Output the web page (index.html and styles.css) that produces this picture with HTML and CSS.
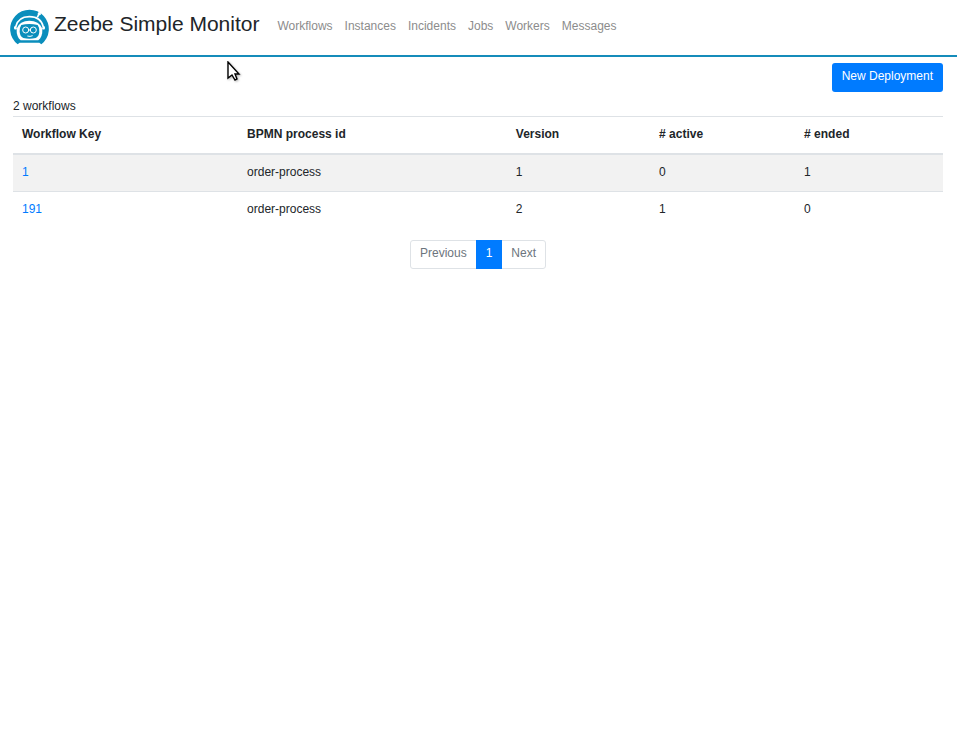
FILE: index.html
```html
<!DOCTYPE html>
<html lang="en">
<head>
<meta charset="utf-8">
<meta name="viewport" content="width=device-width, initial-scale=1">
<title>Zeebe Simple Monitor</title>
<link rel="stylesheet" href="styles.css">
</head>
<body>
<header class="navbar">
  <a class="brand" href="#">
    <svg class="logo" viewBox="0 0 117 108" aria-hidden="true">
      <path class="blue" d="M23 106A58 58 0 1 1 94 106L88 101H29Z"/>
      <path class="line" d="M17 54C22 32 38 23 58 23S95 32 100 54"/>
      <path class="line" d="M82 25L86 17"/>
      <circle class="white" cx="88" cy="14" r="5"/>
      <path class="white" d="M12 55Q13 50 18 51L21 59L15 62Q11 60 12 55ZM105 55Q104 50 99 51L96 59L102 62Q106 60 105 55Z"/>
      <path class="white" d="M20 61C25 43 40 35 58 35S92 43 97 61C98 77 93 88 85 94H32C24 88 19 77 20 61Z"/>
      <path class="blue" d="M34 48Q58 42 83 48Q88 54 88 68Q87 82 77 87Q58 92 40 87Q30 82 29 68Q29 54 34 48Z"/>
      <circle class="line thin" cx="47" cy="63" r="9"/>
      <circle class="line thin" cx="70" cy="63" r="9"/>
      <path class="line thin" d="M55 67L62 59M52 81Q60 84 68 80"/>
    </svg>
    <span>Zeebe Simple Monitor</span>
  </a>
  <nav class="nav">
    <a href="#">Workflows</a>
    <a href="#">Instances</a>
    <a href="#">Incidents</a>
    <a href="#">Jobs</a>
    <a href="#">Workers</a>
    <a href="#">Messages</a>
  </nav>
</header>
<main class="content">
  <div class="actions"><button class="btn" type="button">New Deployment</button></div>
  <p class="count">2 workflows</p>
  <table class="table">
    <colgroup><col class="key"><col class="process"><col class="version"><col class="active"><col></colgroup>
    <thead>
      <tr><th scope="col">Workflow Key</th><th scope="col">BPMN process id</th><th scope="col">Version</th><th scope="col"># active</th><th scope="col"># ended</th></tr>
    </thead>
    <tbody>
      <tr><td><a href="#">1</a></td><td>order-process</td><td>1</td><td>0</td><td>1</td></tr>
      <tr><td><a href="#">191</a></td><td>order-process</td><td>2</td><td>1</td><td>0</td></tr>
    </tbody>
  </table>
  <nav aria-label="Pages">
    <ul class="pagination">
      <li><a class="page" href="#">Previous</a></li>
      <li><a class="page current" href="#" aria-current="page">1</a></li>
      <li><a class="page" href="#">Next</a></li>
    </ul>
  </nav>
</main>
<svg class="pointer" viewBox="0 0 14 21" aria-hidden="true">
  <path d="M1 1V17L5 14L8 19L10 18L8 13H12Z"/>
</svg>
</body>
</html>
```
FILE: styles.css
```css
* { box-sizing: border-box; }

body {
  margin: 0;
  background: #fff;
  color: #212529;
  font-family: "Liberation Sans", Arial, sans-serif;
  font-size: 12px;
  line-height: 18px;
}

a { color: #007bff; text-decoration: none; }

.navbar {
  display: flex;
  align-items: flex-start;
  gap: 12px;
  padding: 8px 10px;
  border-bottom: 2px solid #158cba;
}

.brand {
  display: flex;
  gap: 5px;
  color: #212529;
  font-size: 21px;
  line-height: 32px;
  white-space: nowrap;
}

.logo { width: 39px; height: 36px; margin: 1px 0 2px; }
.blue { fill: #0a8ebc; }
.white { fill: #fff; }
.line { fill: none; stroke: #fff; stroke-width: 5; }
.thin { stroke-width: 3; }

.nav { display: flex; padding-top: 9px; }
.nav a { padding: 0 6px; color: #8c8c8c; }

.content { padding: 6px 14px 0 13px; }

.actions { display: flex; justify-content: flex-end; }

.btn {
  padding: 4px 10px 7px;
  border: 0;
  border-radius: 3px;
  background: #007bff;
  color: #fff;
  font: inherit;
}

.count { margin: 5px 0 1px; }

.table {
  width: 100%;
  margin-bottom: 12px;
  border-spacing: 0;
  table-layout: fixed;
}

.key { width: 24.2%; }
.process { width: 28.9%; }
.version { width: 15.4%; }
.active { width: 15.6%; }

th, td {
  padding: 8px 9px 10px;
  border-top: 1px solid #dee2e6;
  text-align: left;
}

th { border-bottom: 2px solid #dee2e6; }
tbody tr:first-child td { border-top: 0; }
tbody tr:nth-child(odd) { background: #f2f2f2; }

.pagination {
  display: flex;
  justify-content: center;
  margin: 0;
  padding: 0;
  list-style: none;
}

.page {
  display: block;
  margin-left: -1px;
  padding: 3px 9px 6px;
  border: 1px solid #dee2e6;
  color: #6c757d;
}

li:first-child .page { margin-left: 0; border-radius: 3px 0 0 3px; }
li:last-child .page { border-radius: 0 3px 3px 0; }
.current { position: relative; border-color: #007bff; background: #007bff; color: #fff; }

/* Mouse pointer floating over the page */
.pointer {
  position: absolute;
  top: 61px;
  left: 227px;
  width: 14px;
  height: 21px;
  fill: #fff;
  stroke: #000;
  stroke-width: 1.4;
  filter: drop-shadow(1px 1px 1px rgba(0, 0, 0, 0.3));
  pointer-events: none;
}
```
